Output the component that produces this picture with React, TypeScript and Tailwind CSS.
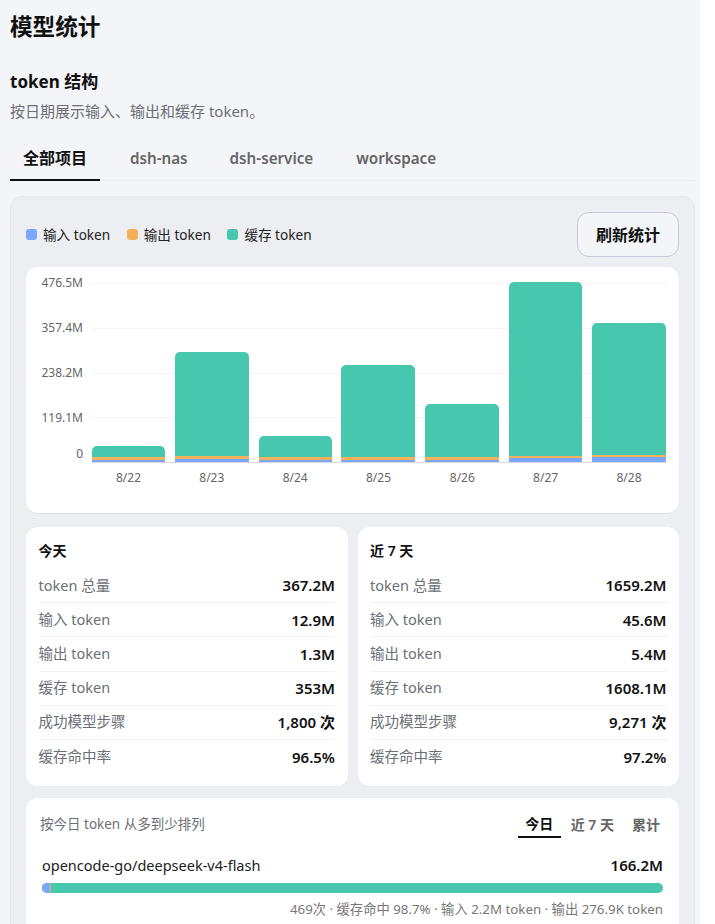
import React from 'react';

const fontStack = { fontFamily: '"Noto Sans", "Noto Sans CJK SC", sans-serif' };

const legend = [
  { label: '输入 token', color: 'bg-[#7aa7fa]' },
  { label: '输出 token', color: 'bg-[#f2b25c]' },
  { label: '缓存 token', color: 'bg-[#47c7ae]' },
];

// heights in px, measured from the chart baseline
const bars = [
  { date: '8/22', input: 2, output: 3, cache: 11, width: 'w-[73px]' },
  { date: '8/23', input: 3, output: 3, cache: 104, width: 'w-[74px]' },
  { date: '8/24', input: 2, output: 3, cache: 21, width: 'w-[73px]' },
  { date: '8/25', input: 2, output: 3, cache: 92, width: 'w-[74px]' },
  { date: '8/26', input: 2, output: 3, cache: 53, width: 'w-[74px]' },
  { date: '8/27', input: 4, output: 2, cache: 174, width: 'w-[73px]' },
  { date: '8/28', input: 5, output: 2, cache: 132, width: 'w-[74px]' },
];

const ticks = ['476.5M', '357.4M', '238.2M'];

const today = [
  ['token 总量', '367.2M'],
  ['输入 token', '12.9M'],
  ['输出 token', '1.3M'],
  ['缓存 token', '353M'],
  ['成功模型步骤', '1,800 次'],
  ['缓存命中率', '96.5%'],
];

const week = [
  ['token 总量', '1659.2M'],
  ['输入 token', '45.6M'],
  ['输出 token', '5.4M'],
  ['缓存 token', '1608.1M'],
  ['成功模型步骤', '9,271 次'],
  ['缓存命中率', '97.2%'],
];

const StatCard = ({ title, rows }: { title: string; rows: string[][] }) => (
  <div className="flex-1 rounded-xl bg-white px-[12.5px] pt-[14px] pb-[12px]">
    <div className="text-sm leading-[20px] font-semibold text-[#111]">{title}</div>
    <div className="mt-[8px]">
      {rows.map(([label, value], i) => (
        <div
          key={label}
          className={`flex h-[34.2px] items-center justify-between ${i < rows.length - 1 ? 'border-b border-[#f1f2f4]' : ''}`}
        >
          <span className="text-[14.5px] text-[#6b6f76]">{label}</span>
          <span className="text-[15px] font-semibold text-[#111]">{value}</span>
        </div>
      ))}
    </div>
  </div>
);

export default function App() {
  return (
    <div className="h-[924px] w-[715px] overflow-hidden bg-white" style={fontStack}>
      <div className="h-full w-[700px] bg-[#f4f5f8] pt-[10px] pl-[10px] pr-[5px]">
        <h1 className="text-[22.6px] leading-[34px] font-bold text-[#111]">模型统计</h1>

        <h2 className="mt-[26px] text-[17px] leading-[24px] font-bold text-[#111]">token 结构</h2>
        <p className="mt-[7px] text-[15px] leading-[20px] text-[#6b6f76]">按日期展示输入、输出和缓存 token。</p>

        <div className="mt-[19px] flex h-[41px] border-b border-[#e8e9ec]">
          <div className="flex h-[41px] w-[90px] items-center justify-center border-b-2 border-[#111] pb-[3px] text-base font-semibold text-[#111]">
            全部项目
          </div>
          <div className="flex items-center pb-[4px] pl-[30px] text-[15.2px] font-semibold text-[#666]">dsh-nas</div>
          <div className="flex items-center pb-[4px] pl-[42px] text-[15.2px] font-semibold text-[#666]">dsh-service</div>
          <div className="flex items-center pb-[4px] pl-[43px] text-[15.2px] font-semibold text-[#666]">workspace</div>
        </div>

        <div className="mt-[15px] h-[800px] rounded-xl border border-[#e6e8ec] bg-[#eceef2] px-[15px] pt-[15px]">
          <div className="flex items-center justify-between">
            <div className="mt-[1px] flex gap-[16.5px]">
              {legend.map((item) => (
                <div key={item.label} className="flex items-center gap-[6px] text-[13.6px] text-[#222]">
                  <span className={`h-[11px] w-[11px] rounded-[3px] ${item.color}`} />
                  {item.label}
                </div>
              ))}
            </div>
            <button className="h-[45px] w-[102px] rounded-xl border border-[#c3cada] bg-[#f4f5f8] text-base font-semibold text-[#111]">
              刷新统计
            </button>
          </div>

          <div className="mt-[10px] flex h-[246px] rounded-xl bg-white pt-[15px] pr-[13px] pl-[13px] shadow-[0_1px_1px_rgba(0,0,0,0.06)]">
            <div className="-mt-[6px] flex w-[44px] flex-col items-end text-xs leading-[14px] text-[#666]">
              {ticks.map((t) => (
                <span key={t} className="h-[45px]">
                  {t}
                </span>
              ))}
              <span className="h-[36px]">119.1M</span>
              <span>0</span>
            </div>
            <div className="ml-[9px] flex-1">
              <div className="relative h-[181px] border-b border-[#d9dadd]">
                <div className="absolute inset-x-0 top-[1px] border-t border-[#f3f4f6]" />
                <div className="absolute inset-x-0 top-[46px] border-t border-[#f3f4f6]" />
                <div className="absolute inset-x-0 top-[91px] border-t border-[#f3f4f6]" />
                <div className="absolute inset-x-0 top-[135px] border-t border-[#f3f4f6]" />
                <div className="absolute inset-0 flex items-end justify-between">
                  {bars.map((b) => (
                    <div key={b.date} className={`flex flex-col ${b.width}`}>
                      <div className="rounded-t-[5px] bg-[#47c7ae]" style={{ height: b.cache }} />
                      <div className="bg-[#f2b25c]" style={{ height: b.output }} />
                      <div className="bg-[#7aa7fa]" style={{ height: b.input }} />
                    </div>
                  ))}
                </div>
              </div>
              <div className="mt-[7px] flex justify-between text-xs leading-[16px] text-[#666]">
                {bars.map((b) => (
                  <span key={b.date} className={`text-center ${b.width}`}>
                    {b.date}
                  </span>
                ))}
              </div>
            </div>
          </div>

          <div className="mt-[14px] flex gap-[10px]">
            <StatCard title="今天" rows={today} />
            <StatCard title="近 7 天" rows={week} />
          </div>

          <div className="mt-[12px] rounded-xl bg-white px-[13px] pt-[13px] pb-[20px]">
            <div className="flex items-center justify-between">
              <span className="pb-[2px] pl-[1px] text-[13.5px] text-[#6b6f76]">按今日 token 从多到少排列</span>
              <div className="flex items-center pr-[6px] text-sm font-semibold">
                <span className="flex h-[27px] w-[43px] items-center justify-center border-b-2 border-[#111] text-[#111]">今日</span>
                <span className="ml-[10px] text-[#666]">近 7 天</span>
                <span className="ml-[18px] text-[#666]">累计</span>
              </div>
            </div>
            <div className="mt-[17px] flex items-center justify-between px-[3px] leading-[20px]">
              <span className="text-[14.5px] text-[#222]">opencode-go/deepseek-v4-flash</span>
              <span className="text-[15px] font-semibold text-[#111]">166.2M</span>
            </div>
            <div className="mx-[3px] mt-[8px] flex h-[10px] overflow-hidden rounded-full bg-[#47c7ae]">
              <div className="h-full w-[8px] bg-[#7aa7fa]" />
              <div className="h-full w-px bg-[#f2b25c]" />
            </div>
            <div className="mt-[6px] px-[3px] text-right text-[13.3px] leading-[20px] text-[#777]">
              469次 · 缓存命中 98.7% · 输入 2.2M token · 输出 276.9K token
            </div>
          </div>
        </div>
      </div>
    </div>
  );
}
